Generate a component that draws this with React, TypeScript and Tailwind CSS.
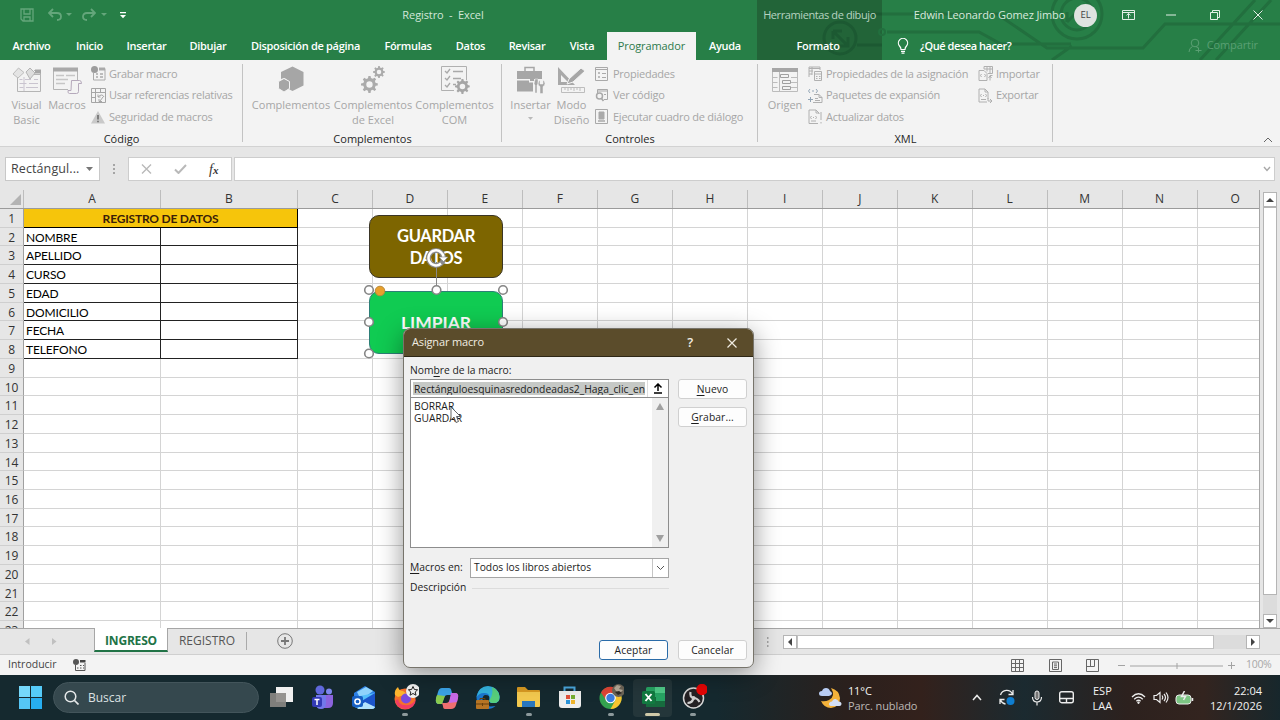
import type { ReactNode } from "react";
import clsx from "clsx";

const tabs = [
  { label: "Archivo", width: "w-[63px]" },
  { label: "Inicio", width: "w-[53px]" },
  { label: "Insertar", width: "w-[61px]" },
  { label: "Dibujar", width: "w-[62px]" },
  { label: "Disposición de página", width: "w-[133px]" },
  { label: "Fórmulas", width: "w-[72px]" },
  { label: "Datos", width: "w-[53px]" },
  { label: "Revisar", width: "w-[60px]" },
  { label: "Vista", width: "w-[50px]" },
  { label: "Programador", width: "w-[89px]", active: true },
  { label: "Ayuda", width: "w-[61px] pr-[3px]" },
];

const columns = ["C", "D", "E", "F", "G", "H", "I", "J", "K", "L", "M", "N"];

const fields = ["", "NOMBRE", "APELLIDO", "CURSO", "EDAD", "DOMICILIO", "FECHA", "TELEFONO"];

const rows = Array.from({ length: 23 }, (_, i) => i + 1);

function Svg({ w, h, box, className, children }: { w: number; h: number; box?: string; className?: string; children: ReactNode }) {
  return (
    <svg width={w} height={h} viewBox={box ?? `0 0 ${w} ${h}`} fill="none" className={clsx("shrink-0", className)}>
      {children}
    </svg>
  );
}

function TitleBar() {
  return (
    <header className="relative h-[60px] shrink-0 overflow-hidden bg-[#277f47] text-white">
      <Svg w={530} h={60} className="absolute top-0 right-0">
        <rect x="7" width="125" height="60" fill="#226438" />
        <g stroke="#226f3e" strokeWidth="3">
          <path d="M137 32h92l22 12h70M132 14h115l50 34h96l22-24h115M322 46l-20 14M505 0l-55 60M521 0l-55 60" />
          <circle cx="327" cy="14" r="25" />
          <circle cx="327" cy="14" r="16" />
          <path d="M317 22l18-18M335 4v12M317 22v-10" />
        </g>
        <g stroke="#1c5932" strokeWidth="3">
          <circle cx="90" cy="38" r="16" />
          <path d="M83 31h9M83 31v8M84 32l14 14M98 37v9h-9M106 14h26M107 45h25" />
        </g>
        <circle cx="132" cy="32" r="3" stroke="#226f3e" strokeWidth="2" />
      </Svg>

      <div className="relative flex h-[30px] items-center text-[11px]">
        <div className="flex w-[372px] items-center pl-[20px] text-[#64a67b]">
          <Svg w={14} h={14} className="stroke-current">
            <path d="M1 1h12v12H3l-2-2zM4 1v5h6V1M4 13V9h6v4" strokeWidth="1.3" />
          </Svg>
          <Svg w={14} h={14} className="ml-[14px] stroke-current">
            <path d="M5 1L1 5l4 4M1.5 5H9q4 0 4 3.500t-4 3.500" strokeWidth="1.8" />
          </Svg>
          <Svg w={6} h={4} className="ml-[4px] fill-current"><path d="M0 0h6L3 3z" /></Svg>
          <Svg w={14} h={14} className="ml-[10px] stroke-current">
            <path d="M9 1l4 4-4 4M12.500 5H5Q1 5 1 8.500T5 12" strokeWidth="1.800" />
          </Svg>
          <Svg w={6} h={4} className="ml-[5px] fill-current"><path d="M0 0h6L3 3z" /></Svg>
          <Svg w={6} h={7} className="ml-[13px] fill-white"><path d="M0 0h6v1.200H0zM0 3h6L3 6.200z" /></Svg>
        </div>
        <span className="w-[142px] text-center tracking-[-0.1px] whitespace-pre text-[#d3e7da]">Registro  -  Excel</span>
        <span className="ml-[243px] w-[125px] text-center tracking-[-0.4px] whitespace-nowrap text-[#b7d3c0]">Herramientas de dibujo</span>
        <span className="ml-[23px] w-[169px] text-center tracking-[-0.1px] whitespace-nowrap text-[#d8eadd]">Edwin Leonardo Gomez Jimbo</span>
        <span className="flex size-[23px] items-center justify-center rounded-full bg-[#dfe3e0] text-[9.5px] text-[#444]">EL</span>
        <div className="flex flex-1 items-center stroke-[#e3f0e7]">
          <Svg w={13} h={10} className="ml-[25px]"><path d="M.5.500h12v9H.5zM.5 2.500h12M6.500 8.500v-5M4.500 5.300l2-1.800 2 1.800" /></Svg>
          <Svg w={10} h={2} className="ml-[31px]"><path d="M0 1h10" /></Svg>
          <Svg w={10} h={10} className="ml-[34px]"><path d="M.5 2.500h7v7h-7zM2.500 2.500v-2h7v7h-2" /></Svg>
          <Svg w={10} h={10} className="ml-[33px]"><path d="M.5.500l9 9M9.500.500l-9 9" /></Svg>
        </div>
      </div>

      <nav className="relative flex h-[30px] items-center text-[11px] font-semibold tracking-[-0.3px]">
        {tabs.map((tab) => (
          <span
            key={tab.label}
            className={clsx(
              "flex items-center justify-center whitespace-nowrap",
              tab.width,
              tab.active ? "mt-[2px] h-[28px] bg-[#f3f3f3] font-medium tracking-[-0.1px] text-[#2d7a4b]" : "h-[30px] pt-[2px]",
            )}
          >
            {tab.label}
          </span>
        ))}
        <span className="w-[122px] pt-[2px] text-center">Formato</span>
        <Svg w={12} h={16} className="mt-[1px] ml-[18px] stroke-white">
          <path d="M4 11.500Q4 9.500 2.500 8a4.600 4.600 0 1 1 7 0Q8 9.500 8 11.500zM4 13.300h4M4.500 15.200h3" strokeWidth="1.200" />
        </Svg>
        <span className="ml-[11px] pt-[2px] tracking-[-0.45px] whitespace-nowrap">¿Qué desea hacer?</span>
        <div className="mr-[22px] ml-auto flex items-center gap-[5px] pt-[1px] font-normal tracking-[-0.1px] text-[#5a9f73]">
          <Svg w={14} h={15} className="stroke-current">
            <circle cx="7" cy="5" r="3.800" />
            <path d="M1 14q0-4 3.500-5.500M8 8.500l2 1.500M7.500 12.500h6M10.500 9.500v5" />
          </Svg>
          Compartir
        </div>
      </nav>
    </header>
  );
}

function BigButton({ icon, lines, width, caret }: { icon: ReactNode; lines: string[]; width: string; caret?: boolean }) {
  return (
    <div className={clsx("flex flex-col items-center", width)}>
      <div className="flex h-[34px] items-center pb-[1px]">{icon}</div>
      {lines.map((line) => (
        <span key={line} className="h-[15px] leading-[15px] whitespace-nowrap">{line}</span>
      ))}
      {caret && <Svg w={6} h={4} className="mt-[5px] fill-[#b9b9b9]"><path d="M0 0h5L2.500 3z" /></Svg>}
    </div>
  );
}

function SmallButton({ icon, label }: { icon: ReactNode; label: string }) {
  return (
    <div className="flex h-[21.500px] items-center tracking-[-0.25px] whitespace-nowrap">
      <span className="flex w-[18px] shrink-0 items-center">{icon}</span>
      {label}
    </div>
  );
}

function Group({ name, width, children }: { name: string; width: string; children: ReactNode }) {
  return (
    <section className={clsx("relative flex flex-col", width)}>
      <div className="flex h-[70px] pt-[3px]">{children}</div>
      <span className="h-[16px] text-center leading-[18px] text-[#262626]">{name}</span>
      <span className="absolute top-[4px] right-0 h-[78px] w-px bg-[#c3c3c3]" />
    </section>
  );
}

const gear = "M7 0h2l.4 2 1.700.700L12.800 1.600l1.500 1.500-1.200 1.700.700 1.700 2 .4v2l-2 .4-.7 1.700 1.200 1.700-1.500 1.500-1.700-1.200-1.700.700L9 16H7l-.4-2-1.700-.7-1.700 1.200-1.500-1.500L2.900 11l-.7-1.700L0 9V7l2.200-.4.700-1.700L1.700 3.200l1.500-1.500 1.700 1.200 1.700-.7zM8 5a3 3 0 1 0 0 6 3 3 0 0 0 0-6z";

function XmlIcon({ variant }: { variant: "props" | "pack" | "refresh" | "import" | "export" }) {
  return (
    <Svg w={15} h={15} className="stroke-[#b0b0b0]">
      {variant === "props" && <path d="M1 11V1h11v3M1 2.500h11M1 5h4M1 8h3M4 1v8M6.500 5.500h7v9h-7zM6.500 8h7M8 10.500h1.500M11 10.500h1.500M8 12.500h1.500M11 12.500h1.500" />}
      {variant === "pack" && (
        <>
          <path d="M6 6.500h5l3 3v5H5M11 6.500v3h3M7 10.500h3M7 12.500h5" />
          <path d="M2.500 9v5M0 11.500h5M2 1L.5 3 2 5M8 1l1.500 2L8 5M4 3h2" stroke="#93a5b5" />
        </>
      )}
      {variant === "refresh" && <path d="M10 14.500H1V1h7l3 3v1M8 1v3h3M3.500 7L2.500 8.500 3.500 10M7.500 7l1 1.500-1 1.500M5 8.500h1M13 3v8M13 13v1.500M3 12h5" />}
      {variant === "import" && <path d="M6 3V.500h8.500v7H10M6 3h8.500M9 .500v5M12 .500v7M1 4.500h5l3 3v7H1zM3.500 8L2.500 9.500l1 1.500M6.500 8l1 1.500-1 1.500M14.500 9.500H12v5M10.500 12L12 10l1.500 2" />}
      {variant === "export" && <path d="M10 11V4L7 1H1v13h8M7 1v3h3M3.500 6L2.500 7.500l1 1.500M7.500 6l1 1.500-1 1.500M5 7.500h1M3 11.500h5M10 10v3h4M12 11l2 2-2 2" />}
    </Svg>
  );
}

function Ribbon() {
  return (
    <div className="flex h-[87px] shrink-0 border-b border-[#d2d2d2] bg-[#f3f3f3] text-[11px] text-[#a6a6a6]">
      <Group name="Código" width="w-[243px]">
        <BigButton
          width="ml-[6px] w-[41px]"
          lines={["Visual", "Basic"]}
          icon={
            <Svg w={30} h={28}>
              <path d="M5.500 11v14.500h23V6M22 4.500h6.500v4H22" stroke="#b5b5b5" />
              <path d="M23 3.500h6v4h-6z" fill="#a6a6a6" />
              <path d="M7.500 13.500h3M13 13.500h6M22 13.500h4M7.500 17.500h7M17 17.500h9M7.500 21.500h4M14 21.500h12M12 11v14" stroke="#c9c4cf" />
              <path d="M1 8l5.500-6L12 6.500 6 12z" fill="#e4e4e4" stroke="#bdbdbd" />
              <path d="M14 6l4-4 5 5-5 6z" fill="#ddd" stroke="#b4b4b4" />
            </Svg>
          }
        />
        <BigButton
          width="w-[40px]"
          lines={["Macros"]}
          icon={
            <Svg w={30} h={28}>
              <path d="M1.500 2.500h24v14M1.500 3v20.500H16" stroke="#b5b5b5" />
              <path d="M1 1.500h25v4H1z" fill="#a9a9a9" />
              <path d="M4 9.500h8M14 9.500h9M4 13.500h12M4 17.500h9" stroke="#c6c6c6" strokeWidth="1.500" />
              <path d="M19.500 14.500h8q2 0 2 3h-3v8q0 2-2 2h-7q-2 0-1.500-3h3z" fill="#f3f3f3" stroke="#b5a9bb" />
            </Svg>
          }
        />
        <div className="ml-[4px] flex flex-col">
          <SmallButton label="Grabar macro" icon={
            <Svg w={15} h={15}>
              <path d="M2.500 7v7h11.500V2.500H8" stroke="#aaa" />
              <path d="M8 1.500h6v3H8z" fill="#aaa" />
              <circle cx="3.500" cy="3.500" r="3.500" fill="#9c9c9c" />
              <path d="M5 8h2M9 8h3M5 11h2M9 11h3" stroke="#aaa" strokeWidth="1.500" />
            </Svg>
          } />
          <SmallButton label="Usar referencias relativas" icon={
            <Svg w={15} h={15} className="stroke-[#a5a5a5]">
              <path d="M.5.500h14v14H.5zM.5 4.500h14M4.500.500v14M9.500.500v4M.5 9.500h4M7 9q4-4 6 0M7 6.500V9h2.500M12 9l-3 4M8 11v2.500h3" />
            </Svg>
          } />
          <SmallButton label="Seguridad de macros" icon={
            <Svg w={14} h={13} className="mt-[1px]">
              <path d="M7 0l7 12.500H0z" fill="#c9c9c9" />
              <path d="M7 4v4.500M7 9.700v1.500" stroke="#777" strokeWidth="1.800" />
            </Svg>
          } />
        </div>
      </Group>

      <Group name="Complementos" width="w-[259px]">
        <BigButton
          width="ml-[7px] w-[82px]"
          lines={["Complementos"]}
          icon={
            <Svg w={26} h={27} className="fill-[#a6a6a6]">
              <path d="M14.500.500L25.500 6v13.500l-11 5.500-3-1.500v-8L6.500 12l-3.500 1V6z" />
              <path d="M6 12.500l5.500 3v7L6 26l-5.500-3.500v-7z" stroke="#f3f3f3" />
            </Svg>
          }
        />
        <BigButton
          width="w-[82px]"
          lines={["Complementos", "de Excel"]}
          icon={
            <Svg w={26} h={30} className="fill-[#ababab]">
              <path d={gear} fillRule="evenodd" transform="translate(13 1) scale(.75)" />
              <path d={gear} fillRule="evenodd" transform="translate(1 11) scale(1.060)" />
            </Svg>
          }
        />
        <BigButton
          width="w-[81px]"
          lines={["Complementos", "COM"]}
          icon={
            <Svg w={30} h={29}>
              <path d="M14 25.500H1.500v-24h25V15" stroke="#b0b0b0" />
              <path d="M5 6l2 2 3-4M5 13l2 2 3-4M5 20l2 2 3-4M13 6.500h10M13 13.500h8M13 19.500h3" stroke="#a9a9a9" strokeWidth="1.300" />
              <path d={gear} fill="#a6a6a6" fillRule="evenodd" transform="translate(15 14) scale(.93)" />
            </Svg>
          }
        />
      </Group>

      <Group name="Controles" width="w-[256px]">
        <BigButton
          width="ml-[8px] w-[41px]"
          lines={["Insertar"]}
          caret
          icon={
            <Svg w={29} h={28} className="fill-[#a6a6a6]">
              <path d="M9 5V1.500h9V5" stroke="#a6a6a6" strokeWidth="1.500" fill="none" />
              <path d="M1 5h25v8h-8v2h-4v-2H1zM1 14.500h12v2h4v9H1z" />
              <path d="M19 13h3v5l-1 1v8h-2v-8l-1-1zM24 14v4h3v-4q2 1.500 2 3.500t-2 3v7h-3v-7q-2-1-2-3t2-3.500z" stroke="#f3f3f3" strokeWidth=".5" />
            </Svg>
          }
        />
        <BigButton
          width="w-[41px]"
          lines={["Modo", "Diseño"]}
          icon={
            <Svg w={29} h={28}>
              <path d="M1 1l17 18H1zM4 9v7h7z" fill="#a9a9a9" fillRule="evenodd" />
              <path d="M10 18l2-5L24 2l4 3-12 11z" fill="#a6a6a6" stroke="#f3f3f3" />
              <path d="M4.500 21.500h23v5h-23zM8 22v2M11 22v3M14 22v2M17 22v3M20 22v2M23 22v3" stroke="#bdbdbd" />
            </Svg>
          }
        />
        <div className="ml-[3px] flex flex-col">
          <SmallButton label="Propiedades" icon={
            <Svg w={13} h={14} className="stroke-[#a9a9a9]">
              <path d="M.5.500h12v13H.5zM.5 2.500h12M3 6h2M7 6.500h4M3 10h2M7 10.500h4M4 5v2M4 9v2" />
            </Svg>
          } />
          <SmallButton label="Ver código" icon={
            <Svg w={13} h={14} className="stroke-[#a9a9a9]">
              <path d="M2.500 5V1.500h10v10H9M2.500 3h10M9 6.500h2" />
              <circle cx="4.500" cy="8" r="3" strokeWidth="1.500" />
              <path d="M6.500 10.500l2 2.500" strokeWidth="1.800" />
            </Svg>
          } />
          <SmallButton label="Ejecutar cuadro de diálogo" icon={
            <Svg w={13} h={15} className="stroke-[#a9a9a9]">
              <path d="M.5.500h12v14H.5z" />
              <path d="M4 3h5v7H4z" fill="#a9a9a9" />
              <path d="M3 12h7" strokeWidth="1.500" />
            </Svg>
          } />
        </div>
      </Group>

      <Group name="XML" width="w-[295px]">
        <BigButton
          width="ml-[8px] w-[38px]"
          lines={["Origen"]}
          icon={
            <Svg w={28} h={26}>
              <path d="M1.500 1.500h25v23h-25zM8.500 5v19M1.500 10.500h5M1.500 15.500h5M1.500 20.500h5M20 10.500h6M20 15.500h6M20 20.500h6" stroke="#bcbcbc" />
              <path d="M1 1h26v4H1z" fill="#a6a6a6" />
              <path d="M9.500 7.500h8v3h-8zM11.500 13.500h8v3h-8zM11.500 19.500h8v3h-8z" fill="#f3f3f3" stroke="#a0a0a0" />
            </Svg>
          }
        />
        <div className="ml-[4px] flex w-[170px] shrink-0 flex-col">
          <SmallButton label="Propiedades de la asignación" icon={<XmlIcon variant="props" />} />
          <SmallButton label="Paquetes de expansión" icon={<XmlIcon variant="pack" />} />
          <SmallButton label="Actualizar datos" icon={<XmlIcon variant="refresh" />} />
        </div>
        <div className="flex flex-col">
          <SmallButton label="Importar" icon={<XmlIcon variant="import" />} />
          <SmallButton label="Exportar" icon={<XmlIcon variant="export" />} />
        </div>
      </Group>
      <Svg w={10} h={6} className="mt-auto mr-[7px] mb-[3px] ml-auto stroke-[#666]"><path d="M1 5l4-4 4 4" /></Svg>
    </div>
  );
}

function FormulaBar() {
  return (
    <div className="flex h-[43px] shrink-0 bg-[#e6e6e6] pt-[10px]">
      <div className="ml-[5px] flex h-[24px] w-[95px] items-center border border-[#c8c8c8] bg-white pl-[5px] text-[12.5px] text-[#444]">
        <span className="w-[75px] tracking-[0.1px] whitespace-nowrap">Rectángul...</span>
        <Svg w={8} h={5} className="fill-[#777]"><path d="M0 0h7L3.500 4z" /></Svg>
      </div>
      <Svg w={2} h={11} className="mt-[7px] ml-[13px] fill-[#a5a5a5]"><path d="M0 0h2v2H0zM0 4h2v2H0zM0 8h2v2H0z" /></Svg>
      <div className="ml-[13px] flex h-[24px] w-[104px] items-center border border-[#cdcdcd] bg-white">
        <Svg w={11} h={10} className="ml-[12px] stroke-[#b9b9b9]"><path d="M1 .500l9 9M10 .500l-9 9" strokeWidth="1.400" /></Svg>
        <Svg w={13} h={10} className="ml-[22px] stroke-[#b9b9b9]"><path d="M1 5.500L4.500 9 12 1" strokeWidth="2" /></Svg>
        <span className="ml-[22px] font-['Liberation_Serif',serif] text-[14px] text-[#333] italic">
          f<span className="text-[11px] font-bold">x</span>
        </span>
      </div>
      <div className="ml-[2px] flex h-[24px] w-[1041px] items-center justify-end border border-[#cdcdcd] bg-white pr-[3px]">
        <Svg w={8} h={6} className="stroke-[#a8a8a8]"><path d="M1 1l3 3.500L7 1" strokeWidth="1.400" /></Svg>
      </div>
    </div>
  );
}

function Grid() {
  return (
    <div className="h-full w-[1260px] shrink-0 overflow-hidden border-r border-[#a6a6a6] bg-white font-['Lato',sans-serif]">
      <div className="flex h-[19px] items-end border-b border-[#9b9b9b] bg-[#e6e6e6] text-center font-['Open_Sans',sans-serif] text-[12px] leading-[18px] text-[#333]">
        <span className="flex h-[18px] w-[24px] shrink-0 items-end justify-end border-r border-[#bdbdbd] pr-[2px] pb-[3px]">
          <Svg w={11} h={11} className="fill-[#b3b3b3]"><path d="M11 0v11H0z" /></Svg>
        </span>
        <span className="h-[18px] w-[137px] shrink-0 border-r border-[#bdbdbd]">A</span>
        <span className="h-[18px] w-[137px] shrink-0 border-r border-[#bdbdbd]">B</span>
        {columns.map((name) => (
          <span key={name} className="h-[18px] w-[74.980px] shrink-0 border-r border-[#bdbdbd]">{name}</span>
        ))}
        <span className="h-[18px] w-[75px] shrink-0">O</span>
      </div>
      {rows.map((row) => (
        <div key={row} className="flex h-[18.740px] text-[12px] leading-[20px] text-black">
          <span className="w-[24px] shrink-0 border-r border-b border-r-[#a0a0a0] border-b-[#cfcfcf] bg-[#e6e6e6] text-center font-['Open_Sans',sans-serif] tracking-[-0.2px] text-[#333]">
            {row}
          </span>
          {row === 1 ? (
            <span className="w-[274px] shrink-0 border-r border-b border-black bg-[#f6c50b] text-center font-bold tracking-[-0.2px] text-[#3a2008]">
              REGISTRO DE DATOS
            </span>
          ) : (
            <>
              <span className={clsx("w-[137px] shrink-0 border-r border-b pl-[2px] tracking-[-0.15px]", row <= 8 ? "border-[#222]" : "border-[#d4d4d4]")}>
                {fields[row - 1]}
              </span>
              <span className={clsx("w-[137px] shrink-0 border-r border-b", row <= 8 ? "border-[#222]" : "border-[#d4d4d4]")} />
            </>
          )}
          {columns.map((name) => (
            <span key={name} className="w-[74.980px] shrink-0 border-r border-b border-[#d4d4d4]" />
          ))}
          <span className="w-[75px] shrink-0 border-b border-[#d4d4d4]" />
        </div>
      ))}
    </div>
  );
}

function ScrollArrow({ d, className }: { d: string; className: string }) {
  return (
    <span className={clsx("flex shrink-0 items-center justify-center border border-[#b5b5b5] bg-white", className)}>
      <Svg w={8} h={8} className="fill-[#444]"><path d={d} /></Svg>
    </span>
  );
}

function SheetTabs() {
  return (
    <div className="flex h-[27px] shrink-0 border-t border-b border-t-[#a6a6a6] border-b-[#cfcfcf] bg-[#e6e6e6] text-[12px]">
      <div className="flex w-[94px] items-center pl-[25px]">
        <Svg w={5} h={8} className="fill-[#c0c0c0]"><path d="M4.500 0v7L0 3.500z" /></Svg>
        <Svg w={5} h={8} className="ml-[22px] fill-[#c0c0c0]"><path d="M0 0v7l4.500-3.500z" /></Svg>
      </div>
      <span className="-mt-px flex h-[24px] w-[74px] items-center justify-center border-r border-b-2 border-l border-x-[#a6a6a6] border-b-[#217346] bg-white pt-[3px] font-bold tracking-[-0.2px] text-[#217346]">
        INGRESO
      </span>
      <span className="mt-[3px] flex h-[18px] w-[79px] items-center justify-center border-r border-[#aaa] text-[#555]">REGISTRO</span>
      <Svg w={16} h={16} className="mt-[4px] ml-[30px] stroke-[#777]">
        <circle cx="8" cy="8" r="7.300" />
        <path d="M8 4v8M4 8h8" strokeWidth="1.800" />
      </Svg>
      <div className="mt-[6px] mr-[20px] ml-auto flex h-[15px]">
        <Svg w={2} h={11} className="mt-[2px] mr-[14px] fill-[#a5a5a5]"><path d="M0 0h1.500v2H0zM0 4h1.500v2H0zM0 8h1.500v2H0z" /></Svg>
        <ScrollArrow className="h-[14px] w-[14px]" d="M6 0v8L2 4z" />
        <span className="h-[14px] w-[417px] border border-[#c0c0c0] bg-white" />
        <span className="h-[14px] w-[32px] bg-[#dcdcdc]" />
        <ScrollArrow className="h-[14px] w-[14px]" d="M2 0v8l4-4z" />
      </div>
    </div>
  );
}

function StatusBar() {
  return (
    <div className="flex h-[20px] shrink-0 items-center bg-[#f3f3f3] pl-[8px] text-[10.5px] text-[#444]">
      <span className="w-[65px]">Introducir</span>
      <Svg w={13} h={12}>
        <path d="M2.500 6v5.500h9.500V4" stroke="#555" />
        <path d="M7 1h5.500v2.500H7z" fill="#444" />
        <circle cx="3" cy="3" r="3" fill="#555" />
        <path d="M4 9h1.500M7 9h1.500M10 9h1M7 6.500h1.500M10 6.500h1" stroke="#555" />
      </Svg>
      <div className="mr-[7px] ml-auto flex items-center stroke-[#666]">
        <Svg w={13} h={13}><path d="M.5.500h12v12H.5zM.5 4.500h12M.5 8.500h12M4.500.500v12M8.500.500v12" /></Svg>
        <Svg w={13} h={13} className="ml-[25px]"><path d="M.5.500h12v12H.5zM3.500 3h6v7.500h-6zM5 5h3M5 6.800h3M5 8.600h3" /></Svg>
        <Svg w={13} h={13} className="ml-[24px]"><path d="M.5.500h12v12H.5zM4.500.500v7M8.500.500v7M.5 7.500h8" /></Svg>
        <Svg w={118} h={9} className="ml-[19px] stroke-[#a3a3a3]"><path d="M0 4.500h7M12 5h93M59 2v6M110 4.500h7M113.500 1v7" /></Svg>
        <span className="ml-[10px] w-[27px] text-[10.500px] tracking-[-0.3px] text-[#a8a8a8]">100%</span>
      </div>
    </div>
  );
}

function Shapes() {
  return (
    <div className="absolute top-[215px] left-[369px] flex w-[134px] flex-col gap-[13px] text-center font-['Lato',sans-serif] leading-[22px] font-bold text-white">
      <div className="flex h-[63px] items-center justify-center rounded-[10px] border border-[#3a3526] bg-[#7d6500] px-[20px] text-[16.5px] tracking-[-0.35px]">
        GUARDAR DATOS
      </div>
      <div className="flex h-[63px] items-center justify-center rounded-[10px] border border-[#2d7f77] bg-[#10cb52] text-[17.5px]">LIMPIAR</div>
      <Svg w={150} h={158} className="absolute -top-[10px] -left-[8px]">
        <path d="M75.500 57v28" stroke="#888" />
        <g fill="#fff" stroke="#858585" strokeWidth="1.600">
          {[[8, 85], [75.5, 85], [142, 85], [8, 117], [142, 117], [8, 148.5]].map(([x, y]) => (
            <circle key={`${x}-${y}`} cx={x} cy={y} r="4.300" />
          ))}
        </g>
        <circle cx="19" cy="86" r="4.800" fill="#e8a02c" stroke="#b98a3a" />
        <circle cx="75" cy="53" r="7.500" stroke="#8a8a8a" strokeWidth="5" />
        <path d="M80 58.500a7.500 7.500 0 1 1 2.500-5" stroke="#fff" strokeWidth="2.500" />
        <path d="M78 52h9l-4.500 4.500z" fill="#fff" stroke="#8a8a8a" strokeWidth=".6" />
      </Svg>
    </div>
  );
}

function DialogButton({ children, primary }: { children: ReactNode; primary?: boolean }) {
  return (
    <button
      className={clsx(
        "h-[20px] w-[69px] shrink-0 rounded-[3px] border bg-[#fdfdfd] leading-[18px] tracking-[0.1px]",
        primary ? "border-[#2a6ba8]" : "border-[#d0d0d0]",
      )}
    >
      {children}
    </button>
  );
}

function MacroDialog() {
  return (
    <div className="absolute top-[328px] left-[403px] flex h-[340px] w-[351px] flex-col overflow-hidden rounded-[7px] border border-[#77746b] bg-[#f0f0f0] text-[10.300px] text-[#1c1c1c] shadow-[0_6px_26px_rgba(0,0,0,0.42)]">
      <div className="flex h-[28px] shrink-0 items-center border-b border-[#2e2716] bg-[#5b4c2b] pl-[8px] text-[11px] tracking-[-0.150px] text-[#f1ede2]">
        Asignar macro
        <span className="mr-[34px] ml-auto text-[13px] font-semibold">?</span>
        <Svg w={10} h={10} className="mr-[16px] stroke-[#f1ede2]"><path d="M.5.500l9 9M9.500.500l-9 9" strokeWidth="1.200" /></Svg>
      </div>
      <span className="mt-[5px] ml-[6px] h-[17px] leading-[17px]">
        Nom<u className="underline-offset-2">b</u>re de la macro:
      </span>
      <div className="ml-[6px] flex">
        <div className="flex h-[169px] w-[259px] flex-col border border-[#8d8d8d] bg-white">
          <div className="flex h-[18px] shrink-0 border-b border-[#8d8d8d]">
            <span className="m-[2px] w-[232px] overflow-hidden bg-[#c6c9c6] pl-px leading-[14px] whitespace-nowrap">
              Rectánguloesquinasredondeadas2_Haga_clic_en
            </span>
            <span className="ml-auto flex w-[21px] items-center justify-center border-l border-[#ddd]">
              <Svg w={10} h={11} className="stroke-black"><path d="M5 8V1.500M1.500 4.500L5 1l3.500 3.500M1 10h8" strokeWidth="1.500" /></Svg>
            </span>
          </div>
          <div className="flex flex-1">
            <ul className="flex-1 pt-[2px] pl-[3px] leading-[12px]">
              <li>BORRAR</li>
              <li>GUARDAR</li>
            </ul>
            <div className="flex w-[16px] flex-col items-center justify-between bg-[#f0f0f0] py-[5px]">
              <Svg w={8} h={7} className="fill-[#a0a0a0]"><path d="M4 0l4 7H0z" /></Svg>
              <Svg w={8} h={7} className="fill-[#a0a0a0]"><path d="M4 7l4-7H0z" /></Svg>
            </div>
          </div>
        </div>
        <div className="ml-[9px] flex flex-col gap-[8px]">
          <DialogButton><u className="underline-offset-2">N</u>uevo</DialogButton>
          <DialogButton><u className="underline-offset-2">G</u>rabar...</DialogButton>
        </div>
      </div>
      <div className="mt-[10px] ml-[6px] flex h-[20px] items-center">
        <span className="w-[60px] whitespace-nowrap"><u className="underline-offset-2">M</u>acros en:</span>
        <div className="flex h-[20px] w-[199px] items-center justify-between border border-[#a5a5a5] bg-white pl-[3px]">
          Todos los libros abiertos
          <span className="flex h-[18px] w-[16px] items-center justify-center border-l border-[#c5c5c5]">
            <Svg w={9} h={6} className="stroke-[#555]"><path d="M1 1l3.500 3.500L8 1" /></Svg>
          </span>
        </div>
      </div>
      <div className="mt-[2px] ml-[6px] flex h-[16px] w-[259px] items-center gap-[6px]">
        Descripción
        <span className="h-px flex-1 bg-[#dcdcdc]" />
      </div>
      <div className="mt-auto mr-[6px] mb-[7px] flex justify-end gap-[10px]">
        <DialogButton primary>Aceptar</DialogButton>
        <DialogButton>Cancelar</DialogButton>
      </div>
      <Svg w={12} h={18} className="absolute top-[77px] left-[46px]">
        <path d="M1 1v13l3-3 2 5.500 2.500-1L6.500 10.500H10.500z" fill="#fff" stroke="#555" strokeWidth=".9" />
      </Svg>
    </div>
  );
}

const apps: { name: string; dot?: boolean; active?: boolean; icon: ReactNode }[] = [
  {
    name: "vista-tareas",
    icon: (
      <>
        <path d="M8 3h17v15H8z" fill="#f0f0f0" />
        <path d="M2 9h16v14H2z" fill="#8b8885" fillOpacity=".9" />
      </>
    ),
  },
  {
    name: "teams",
    icon: (
      <>
        <circle cx="11" cy="6" r="4.500" fill="#6068dc" />
        <circle cx="20" cy="7.500" r="3" fill="#7d86ee" />
        <path d="M15 11h9v8q0 5-5 5h-4z" fill="#8b63dd" />
        <path d="M7 11h10v8q0 6-5 6t-5-5z" fill="#7278eb" />
        <rect x="3" y="13" width="10" height="10" rx="2" fill="#3239b5" />
        <path d="M5.500 15.500h5M8 15.500v5.500" stroke="#fff" strokeWidth="1.500" />
      </>
    ),
  },
  {
    name: "outlook",
    icon: (
      <>
        <path d="M4 9l11-7 10 6v16H7q-3 0-3-3z" fill="#2b7fe6" />
        <path d="M7 8l9-5 7 4-12 9z" fill="#8fd3fb" />
        <path d="M5 13L25 9v13q0 3-3 3H8z" fill="#55c0fa" />
        <path d="M10 18L25 9v14z" fill="#1c55cb" />
        <path d="M7 25l8-7 10 5q-1 2-3 2z" fill="#b4e3fd" />
        <rect x="2" y="12" width="11" height="11" rx="2" fill="#1760c4" />
        <circle cx="7.500" cy="17.500" r="2.600" stroke="#fff" strokeWidth="1.500" />
      </>
    ),
  },
  {
    name: "firefox",
    dot: true,
    icon: (
      <>
        <circle cx="13" cy="15" r="10.500" fill="#f5712c" />
        <path d="M3 11q-1-5 3-8 1 4 5 4l4 3-9 3z" fill="#ffb62e" />
        <path d="M3 17q3 9 12 8 8-1 9-10-4 7-11 6-6 0-7-6z" fill="#f23d62" />
        <circle cx="14" cy="14.500" r="5" fill="#7c4be0" />
        <circle cx="21" cy="7" r="7" fill="#f3f3f3" />
        <path d="M21 2.500l1.400 3 3.200.3-2.400 2.200.8 3.200-3-1.700-3 1.700.8-3.200-2.400-2.200 3.200-.3z" stroke="#222" />
      </>
    ),
  },
  {
    name: "copilot",
    icon: (
      <>
        <path d="M9 4h7q2 0 2.500 3l1 4h-5q-3 0-4 4l-1.500 5H6q-4 0-3-5l2-7q1-4 4-4z" fill="#3ba4e8" />
        <path d="M3 14l1-3 8 1-3 8H6q-4 0-3-6z" fill="#8acb4e" />
        <path d="M18 25h-6q-2 0-2-3l-1-3h4q3 0 4-4l2-6h3q4 0 3 5l-2 7q-1 4-5 4z" fill="#ef6f70" />
        <path d="M18 9h4q4 0 3 5l-1 4-8 1z" fill="#c96ae8" />
      </>
    ),
  },
  {
    name: "edge",
    icon: (
      <>
        <path d="M2.500 14a11.500 11.500 0 0 1 23 0q0 5-6 5-5 0-4-3 1-5-4-5-3 0-3 5 0 8 13 6-3 3-8 3-11-1-11-11z" fill="#1b78cf" />
        <path d="M2.500 13Q5 2 14 2q11 1 11.500 11 0 6-6 6-5 0-4-3 1-8-6-7-4 0-7 4z" fill="#35b3dd" />
        <path d="M18 3q7 3 7.500 10 0 6-6 6-5 0-4-3 4-5 2.500-13z" fill="#58cf7c" />
        <rect x="2" y="16" width="13" height="9" rx="1" fill="#b77524" />
        <path d="M2 20h13M8.500 19v3M6 16v-1.500h5V16" stroke="#67400f" />
      </>
    ),
  },
  {
    name: "explorador",
    dot: true,
    icon: (
      <>
        <path d="M2 4q0-1 1-1h7l3 3h11q1 0 1 1v4H2z" fill="#d99a22" />
        <path d="M2 8h23v14q0 1-1 1H3q-1 0-1-1z" fill="#f3c94f" />
        <path d="M7 17h13v6H7z" fill="#2a76bc" />
      </>
    ),
  },
  {
    name: "tienda",
    icon: (
      <>
        <path d="M8.500 8V3.500h10V8" stroke="#4ba7dd" strokeWidth="2" />
        <path d="M3 7h22v14q0 3-3 3H6q-3 0-3-3z" fill="#eeeeee" />
        <path d="M10 11h4v4h-4z" fill="#e0503a" />
        <path d="M15 11h4v4h-4z" fill="#74ad32" />
        <path d="M10 16h4v4h-4z" fill="#2c93d8" />
        <path d="M15 16h4v4h-4z" fill="#efb42c" />
      </>
    ),
  },
  {
    name: "chrome",
    dot: true,
    icon: (
      <>
        <circle cx="13.500" cy="14" r="11" fill="#34a24f" />
        <path d="M4 8.500A11 11 0 0 1 23.500 9H13.500L9 16z" fill="#df4435" />
        <path d="M23.500 9a11 11 0 0 1-10 16l5-9-2-7z" fill="#f7c42e" />
        <circle cx="13.500" cy="14" r="5.300" fill="#fff" />
        <circle cx="13.500" cy="14" r="4.200" fill="#3c7de0" />
        <circle cx="21.500" cy="6.500" r="6.500" fill="#6c6457" />
        <path d="M17 4l3-3 4 1-2 3 4 1-3 3-4-2z" fill="#b7ac99" />
        <path d="M18 8l3 3 4-2-3-2z" fill="#2f2b26" />
      </>
    ),
  },
  {
    name: "excel",
    active: true,
    icon: (
      <>
        <rect x="7" y="3" width="19" height="20" rx="1.500" fill="#27a463" />
        <path d="M16 3h10v6H16z" fill="#4fc987" />
        <path d="M7 13h10v10H7zM17 17h9v6h-9z" fill="#176b3e" />
        <rect x="3" y="7" width="13" height="13" rx="1.500" fill="#117a40" />
        <path d="M6.500 10l6 7M12.500 10l-6 7" stroke="#fff" strokeWidth="1.900" />
      </>
    ),
  },
  {
    name: "obs",
    dot: true,
    icon: (
      <>
        <circle cx="13.500" cy="14" r="10" fill="#242124" stroke="#d8d8d8" strokeWidth="1.500" />
        <path d="M13.500 14q-4-1-3-6M13.500 14q4 0 6 4M13.500 14q-1 5-6 5" stroke="#cfcfcf" strokeWidth="2.200" />
        <circle cx="13.500" cy="14" r="2" fill="#cfcfcf" />
        <circle cx="22" cy="5.500" r="5.700" fill="#e60505" />
      </>
    ),
  },
];

function Taskbar() {
  return (
    <footer className="flex h-[45px] shrink-0 items-center bg-[linear-gradient(90deg,#15292f_56%,#2a201d_66%,#33211c_72%,#1b2a30_80%,#2c211e_88%,#33241f_94%,#17272c_100%)] text-[#f3f3f3]">
      <Svg w={23} h={23} className="ml-[19px]">
        <path d="M0 0h11v11H0z" fill="#75d8fa" />
        <path d="M12 0h11v11H12z" fill="#55cbf8" />
        <path d="M0 12h11v11H0z" fill="#55c6f6" />
        <path d="M12 12h11v11H12z" fill="#27aef0" />
      </Svg>
      <div className="ml-[11px] flex h-[31px] w-[206px] items-center rounded-full border border-[#43555b] bg-[#35484e] pl-[10px] text-[12px] text-[#dde1e2]">
        <Svg w={15} h={15} className="mr-[9px] stroke-[#e5e8e9]">
          <circle cx="6.500" cy="6.500" r="5.300" strokeWidth="1.500" />
          <path d="M10.500 10.500l4 4" strokeWidth="1.700" />
        </Svg>
        Buscar
      </div>
      <div className="ml-[2px] flex">
        {apps.map((app) => (
          <div
            key={app.name}
            className={clsx(
              "relative mx-[1.200px] flex h-[38px] w-[38.800px] justify-center rounded-[4px] pt-[5px]",
              app.active && "bg-[#24363a]",
            )}
          >
            <Svg w={27} h={27}>{app.icon}</Svg>
            {app.dot && <span className="absolute bottom-[1px] h-[3px] w-[6px] rounded-full bg-[#8d999c]" />}
            {app.active && <span className="absolute bottom-[1px] h-[3px] w-[15px] rounded-full bg-[#cfc9a8]" />}
          </div>
        ))}
      </div>

      <Svg w={24} h={24} className="ml-[104px]">
        <path d="M13 2q5 8-2 12-4 2-8 1 3 7 10 7 9-1 9-10-1-8-9-10z" fill="#f2b13a" />
        <path d="M4 10q-3 0-3-2.500T4 5q1-3 4-3t4 3q2 1 2 2.500T11 10z" fill="#b8cdf4" />
        <path d="M14 20q-3 0-3-2t3-2.500q1-3 3.500-2.500t3 2.500q3 0 3 2.500t-3 2z" fill="#d3dff5" />
      </Svg>
      <div className="ml-[6px] flex w-[124px] flex-col text-[11px] leading-[15px] tracking-[-0.100px] whitespace-nowrap">
        <span>11°C</span>
        <span className="text-[#bdb8b5]">Parc. nublado</span>
      </div>
      <div className="flex flex-1 items-center stroke-[#ececec]">
        <Svg w={10} h={7}><path d="M1 6l4-4.500L9 6" strokeWidth="1.500" /></Svg>
        <Svg w={16} h={17} className="ml-[17px]">
          <path d="M1.500 6A6.500 6.500 0 0 1 13.500 5M14 1v4.500H9.500M1 15v-4.500h4.500M1.500 11q1.500 3.500 5 4" strokeWidth="1.300" />
          <circle cx="11.500" cy="12" r="4" fill="#0f7ed0" stroke="none" />
        </Svg>
        <Svg w={12} h={16} className="ml-[16px]">
          <rect x="4" y="1" width="4" height="8.500" rx="2" fill="#777" />
          <path d="M1.500 7q0 5 4.500 5t4.500-5M6 12v3.500" strokeWidth="1.200" />
        </Svg>
        <Svg w={15} h={13} className="ml-[16px]">
          <rect x=".7" y=".7" width="13.600" height="11" rx="2" strokeWidth="1.400" />
          <path d="M.5 7.500h14M7.500 7.500v4" strokeWidth="1.400" />
        </Svg>
        <span className="ml-[16px] w-[25px] text-center text-[11px] leading-[15px]">ESP LAA</span>
        <Svg w={15} h={12} className="ml-[16px]">
          <path d="M1 5q6.500-6.500 13 0M3.200 7.300q4.300-4.300 8.600 0M5.400 9.300q2.100-2 4.200 0" strokeWidth="1.300" />
          <circle cx="7.500" cy="10.700" r=".8" fill="#eee" />
        </Svg>
        <Svg w={16} h={13} className="ml-[7px]">
          <path d="M1 4.500h2.500L7 1.500v10l-3.500-3H1zM9 4.500q1.500 2 0 4M11 3q3 3.500 0 7M13 1.500q4 5 0 10" strokeWidth="1.200" />
        </Svg>
        <Svg w={19} h={14} className="ml-[6px]">
          <rect x="1" y="4" width="15" height="9" rx="3" fill="#7cc583" />
          <path d="M17.500 7v3" strokeWidth="1.500" />
          <path d="M9.500 0L6.500 5.500h4L8.500 9" strokeWidth="1.500" />
        </Svg>
        <div className="mr-[18px] ml-auto text-right text-[11px] leading-[15px]">
          <div>22:04</div>
          <div>12/1/2026</div>
        </div>
      </div>
    </footer>
  );
}

export default function App() {
  return (
    <div className="relative flex h-[720px] w-[1280px] flex-col overflow-hidden bg-[#e6e6e6] font-['Open_Sans','Noto_Sans',sans-serif]">
      <TitleBar />
      <Ribbon />
      <FormulaBar />
      <div className="flex h-[438px] shrink-0">
        <Grid />
        <div className="ml-[3px] flex w-[14px] flex-col pt-[2px]">
          <ScrollArrow className="h-[15px] w-[14px]" d="M0 6h8L4 2z" />
          <span className="h-[388px] border border-[#b5b5b5] bg-white" />
          <span className="flex-1 bg-[#dcdcdc]" />
          <ScrollArrow className="h-[14px] w-[14px]" d="M0 2h8L4 6z" />
        </div>
      </div>
      <SheetTabs />
      <StatusBar />
      <Taskbar />
      <Shapes />
      <MacroDialog />
    </div>
  );
}
